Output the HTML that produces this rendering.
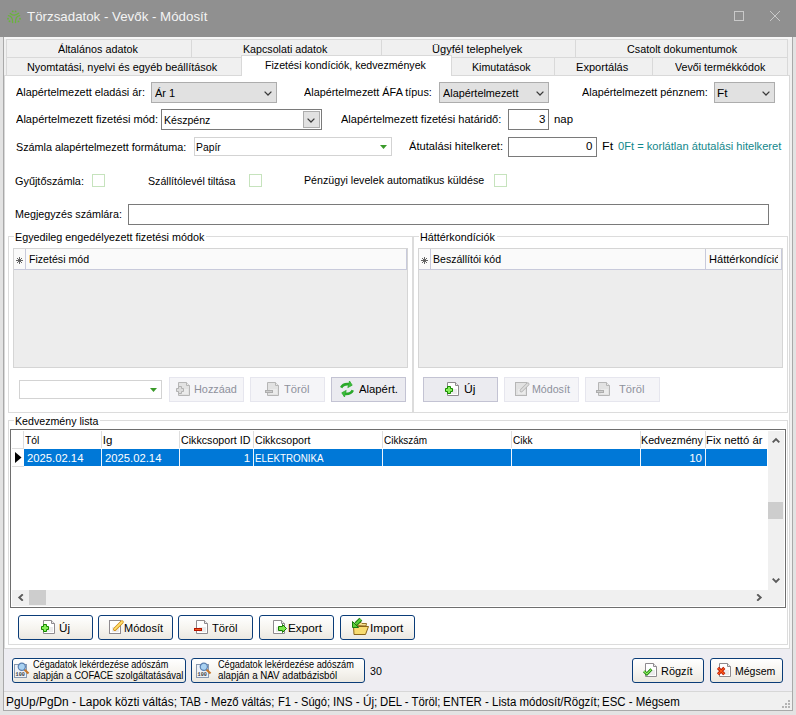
<!DOCTYPE html>
<html><head><meta charset="utf-8"><style>
html,body{margin:0;padding:0;}
body{width:796px;height:715px;overflow:hidden;position:relative;background:#e3e3e3;font-family:"Liberation Sans", sans-serif;}
div,span,svg{position:absolute;box-sizing:border-box;}
.t{white-space:nowrap;line-height:1;font-family:"Liberation Sans", sans-serif;}
</style></head><body>
<div style="left:3px;top:0px;width:790px;height:711px;background:#f0f0f0;border:1px solid #a9a9a9;"></div>
<div style="left:0px;top:0px;width:796px;height:37px;background:#909090;"></div>
<svg style="left:6px;top:9px" width="16" height="16" viewBox="0 0 16 16" fill="none" stroke="#6ab43c" stroke-width="1.35" stroke-linecap="round">
<circle cx="6.7" cy="2.4" r="0.95" fill="#6ab43c" stroke="none"/><circle cx="9.6" cy="2.4" r="0.95" fill="#6ab43c" stroke="none"/>
<path d="M4.3 4.4 Q8.1 7.9 12.6 4.3"/>
<path d="M2.4 6.6 Q6.8 7.0 6.6 13.5"/><path d="M13.6 6.6 Q9.3 7.0 9.5 13.6"/>
<circle cx="2" cy="9.7" r="0.95" fill="#6ab43c" stroke="none"/><circle cx="3.5" cy="12.3" r="0.95" fill="#6ab43c" stroke="none"/>
<circle cx="14" cy="9.8" r="0.95" fill="#6ab43c" stroke="none"/><circle cx="12.5" cy="12.4" r="0.95" fill="#6ab43c" stroke="none"/>
</svg>
<span class="t" style="left:27.102304258254165px;top:10.04px;font-size:13.3px;color:#f4f4f4;font-weight:normal;transform-origin:0 0;">Törzsadatok - Vevők - Módosít</span>
<div style="left:734px;top:11px;width:10px;height:10px;border:1px solid #c9c9c9;"></div>
<svg style="left:769px;top:10px" width="12" height="12" viewBox="0 0 12 12"><path d="M1 1L11 11M11 1L1 11" stroke="#c9c9c9" stroke-width="1"/></svg>
<div style="left:4px;top:37px;width:788px;height:2px;background:#f7f7f7;"></div>
<div style="left:6px;top:39px;width:186px;height:19px;background:#f0f0f0;border:1px solid #d9d9d9;"></div>
<span class="t" style="left:57.77891956148461px;top:43.77px;font-size:11.5px;color:#000;font-weight:normal;transform:scaleX(0.9385);transform-origin:0 0;">Általános adatok</span>
<div style="left:191px;top:39px;width:191px;height:19px;background:#f0f0f0;border:1px solid #d9d9d9;"></div>
<span class="t" style="left:242.7244094488189px;top:43.77px;font-size:11.5px;color:#000;font-weight:normal;transform:scaleX(0.9282);transform-origin:0 0;">Kapcsolati adatok</span>
<div style="left:381px;top:39px;width:195px;height:19px;background:#f0f0f0;border:1px solid #d9d9d9;"></div>
<span class="t" style="left:432.44710494571774px;top:43.77px;font-size:11.5px;color:#000;font-weight:normal;transform:scaleX(0.9613);transform-origin:0 0;">Ügyfél telephelyek</span>
<div style="left:575px;top:39px;width:213px;height:19px;background:#f0f0f0;border:1px solid #d9d9d9;"></div>
<span class="t" style="left:626.7526578391863px;top:43.77px;font-size:11.5px;color:#000;font-weight:normal;transform:scaleX(0.9373);transform-origin:0 0;">Csatolt dokumentumok</span>
<div style="left:6px;top:57px;width:236px;height:19px;background:#f0f0f0;border:1px solid #d9d9d9;"></div>
<span class="t" style="left:27.409001765051972px;top:61.77px;font-size:11.5px;color:#000;font-weight:normal;transform:scaleX(0.9445);transform-origin:0 0;">Nyomtatási, nyelvi és egyéb beállítások</span>
<div style="left:451px;top:57px;width:104px;height:19px;background:#f0f0f0;border:1px solid #d9d9d9;"></div>
<span class="t" style="left:471.6255043227666px;top:61.77px;font-size:11.5px;color:#000;font-weight:normal;transform:scaleX(0.9270);transform-origin:0 0;">Kimutatások</span>
<div style="left:554px;top:57px;width:99px;height:19px;background:#f0f0f0;border:1px solid #d9d9d9;"></div>
<span class="t" style="left:576.2917956328175px;top:61.77px;font-size:11.5px;color:#000;font-weight:normal;transform:scaleX(0.9627);transform-origin:0 0;">Exportálás</span>
<div style="left:652px;top:57px;width:136px;height:19px;background:#f0f0f0;border:1px solid #d9d9d9;"></div>
<span class="t" style="left:675.1530670058393px;top:61.77px;font-size:11.5px;color:#000;font-weight:normal;transform:scaleX(0.9287);transform-origin:0 0;">Vevői termékkódok</span>
<div style="left:4px;top:75px;width:786px;height:574px;background:#ffffff;border:1px solid #d9d9d9;"></div>
<div style="left:241px;top:55px;width:211px;height:21px;background:#fff;border:1px solid #d9d9d9;border-bottom:none"></div>
<span class="t" style="left:265.03037851827884px;top:59.77px;font-size:11.5px;color:#000;font-weight:normal;transform:scaleX(0.9218);transform-origin:0 0;">Fizetési kondíciók, kedvezmények</span>
<span class="t" style="left:15.978716328566678px;top:86.77px;font-size:11.5px;color:#000;font-weight:normal;transform:scaleX(0.9476);transform-origin:0 0;">Alapértelmezett eladási ár:</span>
<div style="left:151px;top:82px;width:126px;height:21px;background:#e1e1e1;border:1px solid #adadad;"></div>
<span class="t" style="left:154.87842278203723px;top:88.27px;font-size:11.5px;color:#000;font-weight:normal;transform:scaleX(0.9607);transform-origin:0 0;">Ár 1</span>
<svg style="left:264px;top:90px" width="9" height="7" viewBox="0 0 9 7"><path d="M0.6 1.6L4 5L7.4 1.6" fill="none" stroke="#3a3a3a" stroke-width="1.25"/></svg>
<span class="t" style="left:304.278815215132px;top:86.77px;font-size:11.5px;color:#000;font-weight:normal;transform:scaleX(0.9432);transform-origin:0 0;">Alapértelmezett ÁFA típus:</span>
<div style="left:439px;top:82px;width:110px;height:21px;background:#e1e1e1;border:1px solid #adadad;"></div>
<span class="t" style="left:442.67880365939476px;top:88.27px;font-size:11.5px;color:#000;font-weight:normal;transform:scaleX(0.9437);transform-origin:0 0;">Alapértelmezett</span>
<svg style="left:536px;top:90px" width="9" height="7" viewBox="0 0 9 7"><path d="M0.6 1.6L4 5L7.4 1.6" fill="none" stroke="#3a3a3a" stroke-width="1.25"/></svg>
<span class="t" style="left:581.6788483538834px;top:86.77px;font-size:11.5px;color:#000;font-weight:normal;transform:scaleX(0.9417);transform-origin:0 0;">Alapértelmezett pénznem:</span>
<div style="left:714px;top:82px;width:61px;height:21px;background:#e1e1e1;border:1px solid #adadad;"></div>
<span class="t" style="left:716.6250458155162px;top:88.27px;font-size:11.5px;color:#000;font-weight:normal;transform:scaleX(1.0335);transform-origin:0 0;">Ft</span>
<svg style="left:762px;top:90px" width="9" height="7" viewBox="0 0 9 7"><path d="M0.6 1.6L4 5L7.4 1.6" fill="none" stroke="#3a3a3a" stroke-width="1.25"/></svg>
<span class="t" style="left:15.978393288127801px;top:113.77px;font-size:11.5px;color:#000;font-weight:normal;transform:scaleX(0.9620);transform-origin:0 0;">Alapértelmezett fizetési mód:</span>
<div style="left:161px;top:109px;width:161px;height:21px;background:#fff;border:1px solid #7a7a7a;"></div>
<span class="t" style="left:164.0334250343879px;top:114.77px;font-size:11.5px;color:#000;font-weight:normal;transform:scaleX(0.9186);transform-origin:0 0;">Készpénz</span>
<div style="left:303px;top:111px;width:17px;height:17px;background:#e1e1e1;border:1px solid #adadad;"></div>
<svg style="left:307px;top:117px" width="9" height="7" viewBox="0 0 9 7"><path d="M0.6 1.6L4 5L7.4 1.6" fill="none" stroke="#3a3a3a" stroke-width="1.25"/></svg>
<span class="t" style="left:340.67841463414635px;top:113.77px;font-size:11.5px;color:#000;font-weight:normal;transform:scaleX(0.9610);transform-origin:0 0;">Alapértelmezett fizetési határidő:</span>
<div style="left:508px;top:109px;width:41px;height:21px;background:#fff;border:1px solid #7a7a7a;"></div>
<span class="t" style="left:539.11px;top:113.77px;font-size:11.5px;color:#000;font-weight:normal;transform-origin:0 0;">3</span>
<span class="t" style="left:553.8423161189359px;top:113.77px;font-size:11.5px;color:#000;font-weight:normal;transform:scaleX(0.9922);transform-origin:0 0;">nap</span>
<span class="t" style="left:16.110129189290397px;top:142.27px;font-size:11.5px;color:#000;font-weight:normal;transform:scaleX(0.9381);transform-origin:0 0;">Számla alapértelmezett formátuma:</span>
<div style="left:194px;top:137px;width:198px;height:19px;background:#fff;border:1px solid #d3d3d3;"></div>
<span class="t" style="left:195.75158747070103px;top:142.27px;font-size:11.5px;color:#000;font-weight:normal;transform:scaleX(0.8994);transform-origin:0 0;">Papír</span>
<svg style="left:380px;top:145px" width="7" height="4" viewBox="0 0 7 4"><path d="M0 0H7L3.5 4Z" fill="#3a9a2a"/></svg>
<span class="t" style="left:408.87826086956517px;top:141.27px;font-size:11.5px;color:#000;font-weight:normal;transform:scaleX(0.9679);transform-origin:0 0;">Átutalási hitelkeret:</span>
<div style="left:508px;top:137px;width:89px;height:20px;background:#fff;border:1px solid #7a7a7a;"></div>
<span class="t" style="left:586.05px;top:141.27px;font-size:11.5px;color:#000;font-weight:normal;transform-origin:0 0;">0</span>
<span class="t" style="left:601.9737324373855px;top:141.27px;font-size:11.5px;color:#000;font-weight:normal;transform:scaleX(1.0879);transform-origin:0 0;">Ft</span>
<span class="t" style="left:618.2660836248543px;top:141.27px;font-size:11.5px;color:#11878b;font-weight:normal;transform:scaleX(0.9659);transform-origin:0 0;">0Ft = korlátlan átutalási hitelkeret</span>
<span class="t" style="left:15.052723689396926px;top:175.77px;font-size:11.5px;color:#000;font-weight:normal;transform:scaleX(0.9462);transform-origin:0 0;">Gyűjtőszámla:</span>
<div style="left:92px;top:174px;width:13px;height:13px;background:#fff;border:1px solid #c6e3bd;"></div>
<span class="t" style="left:147.51707055031633px;top:175.77px;font-size:11.5px;color:#000;font-weight:normal;transform:scaleX(0.9248);transform-origin:0 0;">Szállítólevél tiltása</span>
<div style="left:249px;top:174px;width:13px;height:13px;background:#fff;border:1px solid #c6e3bd;"></div>
<span class="t" style="left:304.12549419197063px;top:174.77px;font-size:11.5px;color:#000;font-weight:normal;transform:scaleX(0.9270);transform-origin:0 0;">Pénzügyi levelek automatikus küldése</span>
<div style="left:494px;top:174px;width:13px;height:13px;background:#fff;border:1px solid #c6e3bd;"></div>
<span class="t" style="left:14.718837104750486px;top:209.27px;font-size:11.5px;color:#000;font-weight:normal;transform:scaleX(0.9341);transform-origin:0 0;">Megjegyzés számlára:</span>
<div style="left:128px;top:204px;width:641px;height:21px;background:#fff;border:1px solid #7a7a7a;"></div>
<div style="left:8px;top:236px;width:405px;height:177px;border:1px solid #dcdcdc;"></div>
<div style="left:13.8px;top:236px;width:192.4px;height:1px;background:#fff;"></div>
<span class="t" style="left:14.916159839155567px;top:231.57px;font-size:11.5px;color:#000;font-weight:normal;transform:scaleX(0.9369);transform-origin:0 0;">Egyedileg engedélyezett fizetési módok</span>
<div style="left:413px;top:236px;width:375px;height:177px;border:1px solid #dcdcdc;"></div>
<div style="left:418.9px;top:236px;width:78.0px;height:1px;background:#fff;"></div>
<span class="t" style="left:420.01604095563135px;top:231.57px;font-size:11.5px;color:#000;font-weight:normal;transform:scaleX(0.9370);transform-origin:0 0;">Háttérkondíciók</span>
<div style="left:13px;top:248px;width:395px;height:120px;background:#ededed;border:1px solid #d5d5d5;"></div>
<div style="left:14px;top:249px;width:393px;height:21px;background:#fafafa;"></div>
<div style="left:14px;top:269px;width:393px;height:1px;background:#c8cadb"></div>
<div style="left:406px;top:249px;width:1px;height:21px;background:#c8cadb"></div>
<div style="left:25px;top:249px;width:1px;height:20px;background:#c8cadb"></div>
<svg style="left:16px;top:257px" width="7" height="7" viewBox="0 0 7 7"><path d="M3.5 0V7M0 3.5H7M1 1L6 6M6 1L1 6" stroke="#555" stroke-width="0.9"/></svg>
<div style="left:0;top:0;width:403px;height:715px;overflow:hidden"><span class="t" style="left:28.630957644354055px;top:253.57px;font-size:11.5px;color:#000;font-weight:normal;transform:scaleX(0.9212);transform-origin:0 0;">Fizetési mód</span></div>
<div style="left:418px;top:248px;width:365px;height:120px;background:#ededed;border:1px solid #d5d5d5;"></div>
<div style="left:419px;top:249px;width:363px;height:21px;background:#fafafa;"></div>
<div style="left:419px;top:269px;width:363px;height:1px;background:#c8cadb"></div>
<div style="left:781px;top:249px;width:1px;height:21px;background:#c8cadb"></div>
<div style="left:430px;top:249px;width:1px;height:20px;background:#c8cadb"></div>
<svg style="left:421px;top:257px" width="7" height="7" viewBox="0 0 7 7"><path d="M3.5 0V7M0 3.5H7M1 1L6 6M6 1L1 6" stroke="#555" stroke-width="0.9"/></svg>
<div style="left:0;top:0;width:778px;height:715px;overflow:hidden"><span class="t" style="left:433.13428903525767px;top:253.57px;font-size:11.5px;color:#000;font-weight:normal;transform:scaleX(0.9177);transform-origin:0 0;">Beszállítói kód</span></div>
<div style="left:705px;top:249px;width:1px;height:20px;background:#c8cadb"></div>
<div style="left:0;top:0;width:778px;height:715px;overflow:hidden"><span class="t" style="left:708.9919620106555px;top:253.57px;font-size:11.5px;color:#000;font-weight:normal;transform:scaleX(0.9626);transform-origin:0 0;">Háttérkondíció</span></div>
<div style="left:19px;top:380px;width:143px;height:19px;background:#fff;border:1px solid #d3d3d3;"></div>
<svg style="left:150px;top:388px" width="7" height="4" viewBox="0 0 7 4"><path d="M0 0H7L3.5 4Z" fill="#3a9a2a"/></svg>
<div style="left:169px;top:377px;width:75px;height:25px;background:#f5f5f8;border:1px solid #e6e6ee;"></div>
<svg style="left:175px;top:380px" width="20" height="18" viewBox="0 0 20 18"><path d="M3.5 2.5H11.5L14.5 5.5V15.5H3.5Z" fill="#e2e2e2" stroke="#b6b6b6"/><path d="M11.5 2.5V5.5H14.5" fill="#ebebeb" stroke="#b6b6b6"/><rect x="6" y="9" width="7" height="5" fill="#ebebeb"/><path d="M1.5 8.5H3.5V6.5H6.5V8.5H8.5V11.5H6.5V13.5H3.5V11.5H1.5Z" fill="#dcdcdc" stroke="#b2b2b2"/></svg>
<span class="t" style="left:194.1085185661056px;top:384.27px;font-size:11.5px;color:#8e919c;font-weight:normal;transform:scaleX(0.9450);transform-origin:0 0;">Hozzáad</span>
<div style="left:250px;top:377px;width:75px;height:25px;background:#f5f5f8;border:1px solid #e6e6ee;"></div>
<svg style="left:264px;top:380px" width="20" height="18" viewBox="0 0 20 18"><path d="M3.5 2.5H11.5L14.5 5.5V15.5H3.5Z" fill="#e2e2e2" stroke="#b6b6b6"/><path d="M11.5 2.5V5.5H14.5" fill="#ebebeb" stroke="#b6b6b6"/><rect x="6" y="9" width="7" height="5" fill="#ebebeb"/><rect x="1.5" y="10.5" width="7" height="2" fill="#cdcdcd" stroke="#adadad"/></svg>
<span class="t" style="left:283.9486058443007px;top:384.27px;font-size:11.5px;color:#8e919c;font-weight:normal;transform:scaleX(0.9733);transform-origin:0 0;">Töröl</span>
<div style="left:331px;top:377px;width:75px;height:25px;background:#ebebf0;border:1px solid #c3c3d3;"></div>
<svg style="left:340px;top:380px" width="14" height="18" viewBox="0 0 14 18">
<path d="M1.2 7.6 Q3 3.6 9 4.2" fill="none" stroke="#2aa82a" stroke-width="2.6"/><path d="M9.5 1L12.2 5.2L7.8 7.6Z" fill="#3cbc3c" stroke="#2aa82a" stroke-width="0.8"/>
<path d="M12.8 10.2 Q11 14.2 5 13.8" fill="none" stroke="#2aa82a" stroke-width="2.6"/><path d="M4.5 17L1.8 12.8L6.2 10.4Z" fill="#3cbc3c" stroke="#2aa82a" stroke-width="0.8"/>
</svg>
<span class="t" style="left:358.5779234017766px;top:384.27px;font-size:11.5px;color:#000;font-weight:normal;transform:scaleX(0.9829);transform-origin:0 0;">Alapért.</span>
<div style="left:423px;top:377px;width:75px;height:25px;background:#ebebf0;border:1px solid #c3c3d3;"></div>
<svg style="left:444px;top:380px" width="20" height="18" viewBox="0 0 20 18"><path d="M3.5 2.5H11.5L14.5 5.5V15.5H3.5Z" fill="#ffffff" stroke="#8e8a8e"/><path d="M11.5 2.5V5.5H14.5" fill="#ececec" stroke="#8e8a8e"/><rect x="6" y="9" width="7" height="5" fill="#ececec"/><path d="M1.5 8.5H3.5V6.5H6.5V8.5H8.5V11.5H6.5V13.5H3.5V11.5H1.5Z" fill="#86ee5a" stroke="#168a00"/></svg>
<span class="t" style="left:463.66434676434676px;top:384.27px;font-size:11.5px;color:#000;font-weight:normal;transform:scaleX(1.0546);transform-origin:0 0;">Új</span>
<div style="left:504px;top:377px;width:75px;height:25px;background:#f5f5f8;border:1px solid #e6e6ee;"></div>
<svg style="left:512px;top:380px" width="20" height="18" viewBox="0 0 20 18"><rect x="3.5" y="2.5" width="11" height="13" fill="#e2e2e2" stroke="#b6b6b6"/><rect x="6" y="9" width="7" height="5" fill="#ebebeb"/><path d="M9.3 10.6L15.8 4.1" stroke="#b4b4b4" stroke-width="3.4" stroke-linecap="round"/><path d="M9.3 10.6L15.8 4.1" stroke="#dedede" stroke-width="1.8" stroke-linecap="round"/></svg>
<span class="t" style="left:531.5271191213742px;top:384.27px;font-size:11.5px;color:#8e919c;font-weight:normal;transform:scaleX(0.9253);transform-origin:0 0;">Módosít</span>
<div style="left:585px;top:377px;width:75px;height:25px;background:#f5f5f8;border:1px solid #e6e6ee;"></div>
<svg style="left:595px;top:380px" width="20" height="18" viewBox="0 0 20 18"><path d="M3.5 2.5H11.5L14.5 5.5V15.5H3.5Z" fill="#e2e2e2" stroke="#b6b6b6"/><path d="M11.5 2.5V5.5H14.5" fill="#ebebeb" stroke="#b6b6b6"/><rect x="6" y="9" width="7" height="5" fill="#ebebeb"/><rect x="1.5" y="10.5" width="7" height="2" fill="#cdcdcd" stroke="#adadad"/></svg>
<span class="t" style="left:619.1496319428953px;top:384.27px;font-size:11.5px;color:#8e919c;font-weight:normal;transform:scaleX(0.9693);transform-origin:0 0;">Töröl</span>
<div style="left:8px;top:420px;width:780px;height:225px;border:1px solid #dcdcdc;"></div>
<div style="left:13.5px;top:420px;width:86.5px;height:1px;background:#fff;"></div>
<span class="t" style="left:14.627313940309785px;top:415.57px;font-size:11.5px;color:#000;font-weight:normal;transform:scaleX(0.9251);transform-origin:0 0;">Kedvezmény lista</span>
<div style="left:10px;top:429px;width:776px;height:179px;background:#fff;border:1px solid #6e6e6e;"></div>
<div style="left:12px;top:448px;width:12px;height:1px;background:#dedede"></div>
<div style="left:23px;top:431px;width:1px;height:17px;background:#dedede"></div>
<div style="left:101px;top:431px;width:1px;height:17px;background:#dedede"></div>
<div style="left:179px;top:431px;width:1px;height:17px;background:#dedede"></div>
<div style="left:253px;top:431px;width:1px;height:17px;background:#dedede"></div>
<div style="left:382px;top:431px;width:1px;height:17px;background:#dedede"></div>
<div style="left:511px;top:431px;width:1px;height:17px;background:#dedede"></div>
<div style="left:640px;top:431px;width:1px;height:17px;background:#dedede"></div>
<div style="left:705px;top:431px;width:1px;height:17px;background:#dedede"></div>
<span class="t" style="left:25.16671675432006px;top:435.27px;font-size:11.5px;color:#000;font-weight:normal;transform:scaleX(0.9031);transform-origin:0 0;">Tól</span>
<span class="t" style="left:102.738720703125px;top:435.27px;font-size:11.5px;color:#000;font-weight:normal;transform-origin:0 0;">Ig</span>
<span class="t" style="left:181.1583085487684px;top:435.27px;font-size:11.5px;color:#000;font-weight:normal;transform:scaleX(0.9276);transform-origin:0 0;">Cikkcsoport ID</span>
<span class="t" style="left:254.96127233197845px;top:435.27px;font-size:11.5px;color:#000;font-weight:normal;transform:scaleX(0.9225);transform-origin:0 0;">Cikkcsoport</span>
<span class="t" style="left:384.49421028253823px;top:435.27px;font-size:11.5px;color:#000;font-weight:normal;transform:scaleX(0.8661);transform-origin:0 0;">Cikkszám</span>
<span class="t" style="left:513.1908528729709px;top:435.27px;font-size:11.5px;color:#000;font-weight:normal;transform:scaleX(0.8719);transform-origin:0 0;">Cikk</span>
<span class="t" style="left:641.1216250964258px;top:435.27px;font-size:11.5px;color:#000;font-weight:normal;transform:scaleX(0.9311);transform-origin:0 0;">Kedvezmény</span>
<span class="t" style="left:706.4748456482772px;top:435.27px;font-size:11.5px;color:#000;font-weight:normal;transform:scaleX(0.9807);transform-origin:0 0;">Fix nettó ár</span>
<div style="left:24px;top:449px;width:743px;height:17px;background:#0078d7;"></div>
<div style="left:101px;top:449px;width:1px;height:17px;background:#eef4fb"></div>
<div style="left:179px;top:449px;width:1px;height:17px;background:#eef4fb"></div>
<div style="left:253px;top:449px;width:1px;height:17px;background:#eef4fb"></div>
<div style="left:382px;top:449px;width:1px;height:17px;background:#eef4fb"></div>
<div style="left:511px;top:449px;width:1px;height:17px;background:#eef4fb"></div>
<div style="left:640px;top:449px;width:1px;height:17px;background:#eef4fb"></div>
<div style="left:705px;top:449px;width:1px;height:17px;background:#eef4fb"></div>
<div style="left:12px;top:466px;width:12px;height:1px;background:#dedede"></div>
<svg style="left:15px;top:452px" width="7" height="11" viewBox="0 0 7 11"><path d="M0 0L6.5 5.5L0 11Z" fill="#000"/></svg>
<span class="t" style="left:26.933280459998016px;top:453.27px;font-size:11.5px;color:#fff;font-weight:normal;transform:scaleX(0.9799);transform-origin:0 0;">2025.02.14</span>
<span class="t" style="left:105.03328045999801px;top:453.27px;font-size:11.5px;color:#fff;font-weight:normal;transform:scaleX(0.9799);transform-origin:0 0;">2025.02.14</span>
<span class="t" style="left:243.67px;top:453.27px;font-size:11.5px;color:#fff;font-weight:normal;transform-origin:0 0;">1</span>
<span class="t" style="left:255.49723320158103px;top:453.27px;font-size:11.5px;color:#fff;font-weight:normal;transform:scaleX(0.8510);transform-origin:0 0;">ELEKTRONIKA</span>
<span class="t" style="left:689.16px;top:453.27px;font-size:11.5px;color:#fff;font-weight:normal;transform-origin:0 0;">10</span>
<div style="left:768px;top:431px;width:16px;height:159px;background:#f0f0f0;"></div>
<div style="left:768px;top:502px;width:15px;height:17px;background:#cdcdcd;"></div>
<svg style="left:772px;top:437px" width="8" height="6" viewBox="0 0 8 6"><path d="M0.7 5.3L4 2L7.3 5.3" fill="none" stroke="#5a5a5a" stroke-width="1.9"/></svg>
<svg style="left:772px;top:578px" width="8" height="6" viewBox="0 0 8 6"><path d="M0.7 0.7L4 4L7.3 0.7" fill="none" stroke="#5a5a5a" stroke-width="1.9"/></svg>
<div style="left:12px;top:590px;width:772px;height:16px;background:#f0f0f0;"></div>
<div style="left:29px;top:590px;width:17px;height:15px;background:#cdcdcd;"></div>
<svg style="left:17px;top:594px" width="7" height="7" viewBox="0 0 7 7"><path d="M5.8 0.3L2.3 3.5L5.8 6.7" fill="none" stroke="#5a5a5a" stroke-width="1.9"/></svg>
<svg style="left:756px;top:594px" width="7" height="7" viewBox="0 0 7 7"><path d="M1.2 0.3L4.7 3.5L1.2 6.7" fill="none" stroke="#5a5a5a" stroke-width="1.9"/></svg>
<div style="left:18px;top:615px;width:75px;height:25px;border:1px solid #0a3c78;border-radius:3px;background:linear-gradient(#ffffff,#f6f4ef 55%,#ebe8e1)"></div>
<span class="t" style="left:58.80293040293041px;top:623.27px;font-size:11.5px;color:#000;font-weight:normal;transform:scaleX(1.0111);transform-origin:0 0;">Új</span>
<svg style="left:40px;top:618px" width="20" height="18" viewBox="0 0 20 18"><path d="M3.5 2.5H11.5L14.5 5.5V15.5H3.5Z" fill="#ffffff" stroke="#8e8a8e"/><path d="M11.5 2.5V5.5H14.5" fill="#ececec" stroke="#8e8a8e"/><rect x="6" y="9" width="7" height="5" fill="#ececec"/><path d="M1.5 8.5H3.5V6.5H6.5V8.5H8.5V11.5H6.5V13.5H3.5V11.5H1.5Z" fill="#86ee5a" stroke="#168a00"/></svg>
<div style="left:98px;top:615px;width:75px;height:25px;border:1px solid #0a3c78;border-radius:3px;background:linear-gradient(#ffffff,#f6f4ef 55%,#ebe8e1)"></div>
<span class="t" style="left:124.10109828217404px;top:623.27px;font-size:11.5px;color:#000;font-weight:normal;transform:scaleX(0.9529);transform-origin:0 0;">Módosít</span>
<svg style="left:106px;top:618px" width="20" height="18" viewBox="0 0 20 18"><rect x="3.5" y="2.5" width="11" height="13" fill="#ffffff" stroke="#8e8a8e"/><rect x="6" y="9" width="7" height="5" fill="#ececec"/><path d="M8.8 11.2L16 4" stroke="#d08a10" stroke-width="3.4" stroke-linecap="round"/><path d="M8.8 11.2L16 4" stroke="#ffe070" stroke-width="1.8" stroke-linecap="round"/></svg>
<div style="left:178px;top:615px;width:75px;height:25px;border:1px solid #0a3c78;border-radius:3px;background:linear-gradient(#ffffff,#f6f4ef 55%,#ebe8e1)"></div>
<span class="t" style="left:212.2486058443007px;top:623.27px;font-size:11.5px;color:#000;font-weight:normal;transform:scaleX(0.9733);transform-origin:0 0;">Töröl</span>
<svg style="left:193px;top:618px" width="20" height="18" viewBox="0 0 20 18"><path d="M3.5 2.5H11.5L14.5 5.5V15.5H3.5Z" fill="#ffffff" stroke="#8e8a8e"/><path d="M11.5 2.5V5.5H14.5" fill="#ececec" stroke="#8e8a8e"/><rect x="6" y="9" width="7" height="5" fill="#ececec"/><rect x="1.5" y="10.5" width="7" height="2" fill="#f05a1e" stroke="#b41400"/></svg>
<div style="left:259px;top:615px;width:75px;height:25px;border:1px solid #0a3c78;border-radius:3px;background:linear-gradient(#ffffff,#f6f4ef 55%,#ebe8e1)"></div>
<span class="t" style="left:288.0334728033473px;top:623.27px;font-size:11.5px;color:#000;font-weight:normal;transform:scaleX(1.0246);transform-origin:0 0;">Export</span>
<svg style="left:270px;top:618px" width="20" height="18" viewBox="0 0 20 18"><path d="M3.5 2.5H11.5L14.5 5.5V15.5H3.5Z" fill="#ffffff" stroke="#8e8a8e"/><path d="M11.5 2.5V5.5H14.5" fill="#ececec" stroke="#8e8a8e"/><rect x="6" y="9" width="7" height="5" fill="#ececec"/><path d="M8.5 8.5H12.5V6.5L16.5 10.5L12.5 14.5V12.5H8.5Z" fill="#7ee84e" stroke="#167a00"/></svg>
<div style="left:340px;top:615px;width:75px;height:25px;border:1px solid #0a3c78;border-radius:3px;background:linear-gradient(#ffffff,#f6f4ef 55%,#ebe8e1)"></div>
<span class="t" style="left:369.71325px;top:623.27px;font-size:11.5px;color:#000;font-weight:normal;transform:scaleX(1.0240);transform-origin:0 0;">Import</span>
<svg style="left:351px;top:617px" width="20" height="19" viewBox="0 0 20 19">
<path d="M5 8.5L6 5.5H10L11 6.5H15.5L15 9Z" fill="#f6e08a" stroke="#8a6418" stroke-width="0.9"/>
<path d="M2.5 9.5H17.5L14.5 17.5H3Z" fill="#f8dc70" stroke="#8a6418" stroke-width="1"/>
<path d="M9.8 2.2L5 7" stroke="#1a7a10" stroke-width="4.2"/><path d="M9.8 2.2L5 7" stroke="#5ad038" stroke-width="2.2"/>
<path d="M1.5 4.5V10.5H7.5Z" fill="#5ad038" stroke="#1a7a10" stroke-width="1"/>
</svg>
<div style="left:4px;top:649px;width:788px;height:42px;background:#eeedf2;"></div>
<div style="left:12px;top:658px;width:174px;height:25px;border:1px solid #0a3c78;border-radius:3px;background:linear-gradient(#ffffff,#f6f4ef 55%,#ebe8e1)"></div>
<svg style="left:14px;top:662px" width="17" height="16" viewBox="0 0 17 16">
<rect x="0.5" y="2.5" width="12" height="13" fill="#eef2f8" stroke="#8a9ab0"/><text x="1.6" y="13.6" font-size="5.2" font-weight="bold" font-family="Liberation Mono" fill="#3a3a3a">100</text>
<path d="M9.6 6.8L14.5 11.5" stroke="#c8782a" stroke-width="2.2"/><circle cx="7.8" cy="4.8" r="3.6" fill="#a9d2f2" stroke="#5a7fb0" stroke-width="1.2"/></svg>
<span class="t" style="left:32.93721069036408px;top:659.83px;font-size:10px;color:#000;font-weight:normal;transform:scaleX(0.9113);transform-origin:0 0;">Cégadatok lekérdezése adószám</span>
<span class="t" style="left:32.99686219739292px;top:671.03px;font-size:10px;color:#000;font-weight:normal;transform:scaleX(0.9490);transform-origin:0 0;">alapján a COFACE szolgáltatásával</span>
<div style="left:191px;top:658px;width:174px;height:25px;border:1px solid #0a3c78;border-radius:3px;background:linear-gradient(#ffffff,#f6f4ef 55%,#ebe8e1)"></div>
<svg style="left:196px;top:662px" width="17" height="16" viewBox="0 0 17 16">
<rect x="0.5" y="2.5" width="12" height="13" fill="#eef2f8" stroke="#8a9ab0"/><text x="1.6" y="13.6" font-size="5.2" font-weight="bold" font-family="Liberation Mono" fill="#3a3a3a">100</text>
<path d="M9.6 6.8L14.5 11.5" stroke="#c8782a" stroke-width="2.2"/><circle cx="7.8" cy="4.8" r="3.6" fill="#a9d2f2" stroke="#5a7fb0" stroke-width="1.2"/></svg>
<span class="t" style="left:217.5354864380927px;top:659.83px;font-size:10px;color:#000;font-weight:normal;transform:scaleX(0.9147);transform-origin:0 0;">Cégadatok lekérdezése adószám</span>
<span class="t" style="left:217.58581457274266px;top:671.03px;font-size:10px;color:#000;font-weight:normal;transform:scaleX(0.9750);transform-origin:0 0;">alapján a NAV adatbázisból</span>
<span class="t" style="left:369.5952830188679px;top:666.27px;font-size:11.5px;color:#000;font-weight:normal;transform:scaleX(0.9240);transform-origin:0 0;">30</span>
<div style="left:632px;top:658px;width:72px;height:25px;border:1px solid #0a3c78;border-radius:3px;background:linear-gradient(#ffffff,#f6f4ef 55%,#ebe8e1)"></div>
<span class="t" style="left:660.5037656903766px;top:666.27px;font-size:11.5px;color:#000;font-weight:normal;transform:scaleX(0.9500);transform-origin:0 0;">Rögzít</span>
<svg style="left:642px;top:661px" width="20" height="18" viewBox="0 0 20 18"><path d="M3.5 2.5H11.5L14.5 5.5V15.5H3.5Z" fill="#ffffff" stroke="#8e8a8e"/><path d="M11.5 2.5V5.5H14.5" fill="#ececec" stroke="#8e8a8e"/><rect x="6" y="9" width="7" height="5" fill="#ececec"/><path d="M2 10.2L4.9 13L9.4 8.3" fill="none" stroke="#137a00" stroke-width="2.8"/><path d="M2 10.2L4.9 13L9.4 8.3" fill="none" stroke="#8ff060" stroke-width="1.2"/></svg>
<div style="left:710px;top:658px;width:73px;height:25px;border:1px solid #0a3c78;border-radius:3px;background:linear-gradient(#ffffff,#f6f4ef 55%,#ebe8e1)"></div>
<span class="t" style="left:734.6388609271523px;top:666.27px;font-size:11.5px;color:#000;font-weight:normal;transform:scaleX(0.9128);transform-origin:0 0;">Mégsem</span>
<svg style="left:716px;top:661px" width="20" height="18" viewBox="0 0 20 18"><path d="M3.5 2.5H11.5L14.5 5.5V15.5H3.5Z" fill="#ffffff" stroke="#8e8a8e"/><path d="M11.5 2.5V5.5H14.5" fill="#ececec" stroke="#8e8a8e"/><rect x="6" y="9" width="7" height="5" fill="#ececec"/><path d="M2 6.9L8.3 13.2M8.3 6.9L2 13.2" stroke="#b41400" stroke-width="3"/><path d="M2.2 7.1L8.1 13M8.1 7.1L2.2 13" stroke="#ff5a1a" stroke-width="1.3"/></svg>
<div style="left:4px;top:691px;width:788px;height:1px;background:#d7d7d7"></div>
<span class="t" style="left:6.025944869726408px;top:695.92px;font-size:12.5px;color:#000;font-weight:normal;transform:scaleX(0.9499);transform-origin:0 0;">PgUp/PgDn - Lapok közti váltás;</span>
<span class="t" style="left:180.24711828338357px;top:695.92px;font-size:12.5px;color:#000;font-weight:normal;transform:scaleX(0.9007);transform-origin:0 0;">TAB - Mező váltás;</span>
<span class="t" style="left:277.58429967426713px;top:695.92px;font-size:12.5px;color:#000;font-weight:normal;transform:scaleX(0.8930);transform-origin:0 0;">F1 - Súgó;</span>
<span class="t" style="left:332.7169201520913px;top:695.92px;font-size:12.5px;color:#000;font-weight:normal;transform:scaleX(0.9389);transform-origin:0 0;">INS - Új;</span>
<span class="t" style="left:380.37094600917004px;top:695.92px;font-size:12.5px;color:#000;font-weight:normal;transform:scaleX(0.9060);transform-origin:0 0;">DEL - Töröl;</span>
<span class="t" style="left:443.15869926933374px;top:695.92px;font-size:12.5px;color:#000;font-weight:normal;transform:scaleX(0.9180);transform-origin:0 0;">ENTER - Lista módosít/Rögzít;</span>
<span class="t" style="left:602.3586260216479px;top:695.92px;font-size:12.5px;color:#000;font-weight:normal;transform:scaleX(0.9181);transform-origin:0 0;">ESC - Mégsem</span>
<div style="left:788px;top:700px;width:2px;height:2px;background:#b4b4b4"></div>
<div style="left:785px;top:703px;width:2px;height:2px;background:#b4b4b4"></div>
<div style="left:788px;top:703px;width:2px;height:2px;background:#b4b4b4"></div>
<div style="left:782px;top:706px;width:2px;height:2px;background:#b4b4b4"></div>
<div style="left:785px;top:706px;width:2px;height:2px;background:#b4b4b4"></div>
<div style="left:788px;top:706px;width:2px;height:2px;background:#b4b4b4"></div>
</body></html>
